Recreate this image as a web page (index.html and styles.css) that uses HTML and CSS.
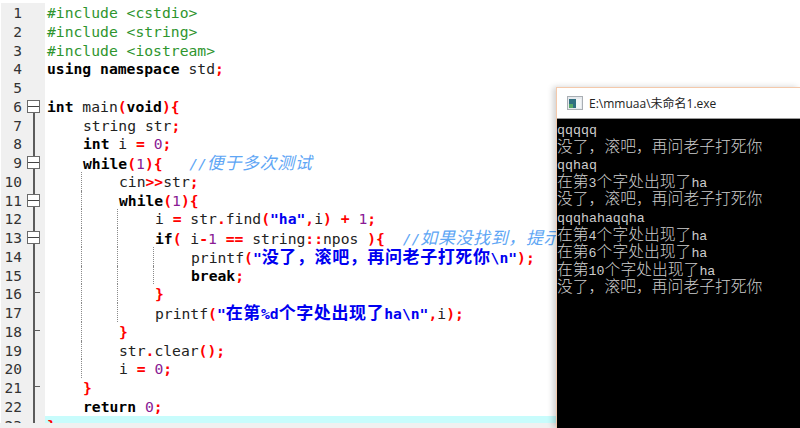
FILE: index.html
```html
<!DOCTYPE html>
<html lang="zh">
<head>
<meta charset="utf-8">
<title>未命名1</title>
<link rel="stylesheet" href="styles.css">
</head>
<body>
<main class="editor">
<div class="row"><div class="gut"><span class="num">1</span><span class="fold"></span></div><div class="code"><span class="pp">#include &lt;cstdio&gt;</span></div></div>
<div class="row"><div class="gut"><span class="num">2</span><span class="fold"></span></div><div class="code"><span class="pp">#include &lt;string&gt;</span></div></div>
<div class="row"><div class="gut"><span class="num">3</span><span class="fold"></span></div><div class="code"><span class="pp">#include &lt;iostream&gt;</span></div></div>
<div class="row"><div class="gut"><span class="num">4</span><span class="fold"></span></div><div class="code"><b>using namespace</b> std<i class="s">;</i></div></div>
<div class="row"><div class="gut"><span class="num">5</span><span class="fold"></span></div><div class="code"></div></div>
<div class="row"><div class="gut"><span class="num">6</span><span class="fold box first"></span></div><div class="code"><b>int</b> main<i class="s">(</i><b>void</b><i class="s">){</i></div></div>
<div class="row"><div class="gut"><span class="num">7</span><span class="fold line"></span></div><div class="code"><span class="ind"></span>string str<i class="s">;</i></div></div>
<div class="row"><div class="gut"><span class="num">8</span><span class="fold line"></span></div><div class="code"><span class="ind"></span><b>int</b> i <i class="s">=</i> <span class="n">0</span><i class="s">;</i></div></div>
<div class="row"><div class="gut"><span class="num">9</span><span class="fold box"></span></div><div class="code"><span class="ind"></span><b>while</b><i class="s">(</i><span class="n">1</span><i class="s">){</i>   <em class="c">//<span class="cjk">便于多次测试</span></em></div></div>
<div class="row"><div class="gut"><span class="num">10</span><span class="fold line"></span></div><div class="code"><span class="ind"></span><span class="ind g"></span>cin<i class="s">&gt;&gt;</i>str<i class="s">;</i></div></div>
<div class="row"><div class="gut"><span class="num">11</span><span class="fold box"></span></div><div class="code"><span class="ind"></span><span class="ind g"></span><b>while</b><i class="s">(</i><span class="n">1</span><i class="s">){</i></div></div>
<div class="row"><div class="gut"><span class="num">12</span><span class="fold line"></span></div><div class="code"><span class="ind"></span><span class="ind g"></span><span class="ind g"></span>i <i class="s">=</i> str<i class="s">.</i>find<i class="s">(</i><span class="st">"ha"</span><i class="s">,</i>i<i class="s">)</i> <i class="s">+</i> <span class="n">1</span><i class="s">;</i></div></div>
<div class="row"><div class="gut"><span class="num">13</span><span class="fold box"></span></div><div class="code"><span class="ind"></span><span class="ind g"></span><span class="ind g"></span><b>if</b><i class="s">(</i> i<i class="s">-</i><span class="n">1</span> <i class="s">==</i> string<i class="s">::</i>npos <i class="s">){</i>  <em class="c">//<span class="cjk">如果没找到，提示</span></em></div></div>
<div class="row"><div class="gut"><span class="num">14</span><span class="fold line"></span></div><div class="code"><span class="ind"></span><span class="ind g"></span><span class="ind g"></span><span class="ind g"></span>printf<i class="s">(</i><span class="st">"<span class="cjk">没了，滚吧，再问老子打死你</span>\n"</span><i class="s">);</i></div></div>
<div class="row"><div class="gut"><span class="num">15</span><span class="fold line"></span></div><div class="code"><span class="ind"></span><span class="ind g"></span><span class="ind g"></span><span class="ind g"></span><b>break</b><i class="s">;</i></div></div>
<div class="row"><div class="gut"><span class="num">16</span><span class="fold end"></span></div><div class="code"><span class="ind"></span><span class="ind g"></span><span class="ind g"></span><i class="s">}</i></div></div>
<div class="row"><div class="gut"><span class="num">17</span><span class="fold line"></span></div><div class="code"><span class="ind"></span><span class="ind g"></span><span class="ind g"></span>printf<i class="s">(</i><span class="st">"<span class="cjk">在第</span>%d<span class="cjk">个字处出现了</span>ha\n"</span><i class="s">,</i>i<i class="s">);</i></div></div>
<div class="row"><div class="gut"><span class="num">18</span><span class="fold end"></span></div><div class="code"><span class="ind"></span><span class="ind g"></span><i class="s">}</i></div></div>
<div class="row"><div class="gut"><span class="num">19</span><span class="fold line"></span></div><div class="code"><span class="ind"></span><span class="ind g"></span>str<i class="s">.</i>clear<i class="s">();</i></div></div>
<div class="row"><div class="gut"><span class="num">20</span><span class="fold line"></span></div><div class="code"><span class="ind"></span><span class="ind g"></span>i <i class="s">=</i> <span class="n">0</span><i class="s">;</i></div></div>
<div class="row"><div class="gut"><span class="num">21</span><span class="fold end"></span></div><div class="code"><span class="ind"></span><i class="s">}</i></div></div>
<div class="row"><div class="gut"><span class="num">22</span><span class="fold line"></span></div><div class="code"><span class="ind"></span><b>return</b> <span class="n">0</span><i class="s">;</i></div></div>
<div class="row active"><div class="gut"><span class="num">23</span><span class="fold line"></span></div><div class="code"><i class="s">}</i></div></div>
</main>
<section class="console">
<header class="titlebar">
<svg class="appicon" width="16" height="14" viewBox="0 0 16 14"><rect x="0.5" y="0.5" width="15" height="13" fill="#e6eaee" stroke="#a9aeb3"/><rect x="2" y="3" width="7" height="9" fill="#2f6f80"/><rect x="9" y="3" width="5" height="9" fill="#f4f6f7"/><rect x="2" y="8" width="4" height="4" fill="#58a868"/></svg>
<span class="wintitle">E:\mmuaa\未命名1.exe</span>
</header>
<pre class="term">qqqqq
<span class="z">没了，滚吧，再问老子打死你</span>
qqhaq
<span class="z">在第</span>3<span class="z">个字处出现了</span>ha
<span class="z">没了，滚吧，再问老子打死你</span>
qqqhahaqqha
<span class="z">在第</span>4<span class="z">个字处出现了</span>ha
<span class="z">在第</span>6<span class="z">个字处出现了</span>ha
<span class="z">在第</span>10<span class="z">个字处出现了</span>ha
<span class="z">没了，滚吧，再问老子打死你</span></pre>
</section>
</body>
</html>
```
FILE: styles.css
```css
html, body {
  margin: 0;
  padding: 0;
  width: 800px;
  height: 428px;
  overflow: hidden;
  background: #f0f0f0;
}
.editor {
  position: relative;
  height: 423px;
  padding: 3px 0 0 1px;
  box-sizing: border-box;
  background: #fff;
  overflow: hidden;
  font: 14.7px/18.76px "DejaVu Sans Mono", "Noto Sans CJK SC", monospace;
  color: #222;
}
.row {
  display: flex;
  height: 18.76px;
}
.gut {
  display: flex;
  flex: none;
  width: 44px;
  background: #f0f0f0;
}
.num {
  width: 21px;
  text-align: right;
  color: #333;
  font-size: 14.5px;
  line-height: 20px;
}
.fold {
  position: relative;
  width: 23px;
}
.fold.line::before, .fold.end::before, .fold.box::before {
  content: "";
  position: absolute;
  left: 11px;
  top: 0;
  bottom: 0;
  width: 2px;
  background: #5c5c5c;
}
.fold.first::before { top: 9px; }
.fold.end::after {
  content: "";
  position: absolute;
  left: 11px;
  top: 8px;
  width: 7px;
  height: 1px;
  background: #5c5c5c;
}
.fold.box::after {
  content: "";
  position: absolute;
  left: 5px;
  top: 3px;
  width: 11px;
  height: 11px;
  border: 1px solid #6a6a6a;
  background: #fff;
  box-shadow: inset 0 5px 0 #fff, inset 0 6px 0 #444, inset 0 11px 0 #fff;
}
.code {
  flex: 1;
  padding-left: 2px;
  white-space: pre;
  line-height: 20px;
  height: 18.76px;
}
.active .code { background: #c8fcfc; }
.ind {
  position: relative;
  display: inline-block;
  width: 36px;
  height: 18.76px;
  vertical-align: top;
}
.ind.g::before {
  content: "";
  position: absolute;
  left: -2px;
  top: 0;
  bottom: 0;
  border-left: 1px dotted #8a8a8a;
}
b { font-weight: 700; color: #000; }
.s { font-style: normal; font-weight: 700; color: #f00; }
.n { color: #8a1a94; }
.pp { color: #2e952e; }
.st { color: #0000f0; font-weight: 700; }
.c { color: #5ea6f5; font-style: italic; }
.cjk { font-size: 17px; letter-spacing: 0.6px; }
.console {
  position: absolute;
  left: 556px;
  top: 87px;
  width: 244px;
  height: 341px;
  box-sizing: border-box;
  border: 1px solid #f4c9ab;
  border-right: 0;
  border-bottom: 0;
  box-shadow: -3px 0 6px rgba(0, 0, 0, 0.18);
  display: flex;
  flex-direction: column;
  background: #000;
}
.titlebar {
  flex: none;
  display: flex;
  align-items: center;
  gap: 6px;
  height: 31px;
  padding-left: 10px;
  background: #fff;
  border-bottom: 1px solid #9a9a9a;
  box-sizing: border-box;
}
.wintitle {
  font: 12px "Open Sans", "Noto Sans CJK SC", sans-serif;
  color: #222;
}
.term {
  margin: 0;
  flex: 1;
  padding: 3px 0 0 0;
  background: #000;
  color: #cccccc;
  font: 13.3px/17.6px "Liberation Mono", "Noto Sans CJK SC", monospace;
  overflow: hidden;
}
.z { font-size: 15.8px; line-height: 17.6px; font-weight: 300; }
```
